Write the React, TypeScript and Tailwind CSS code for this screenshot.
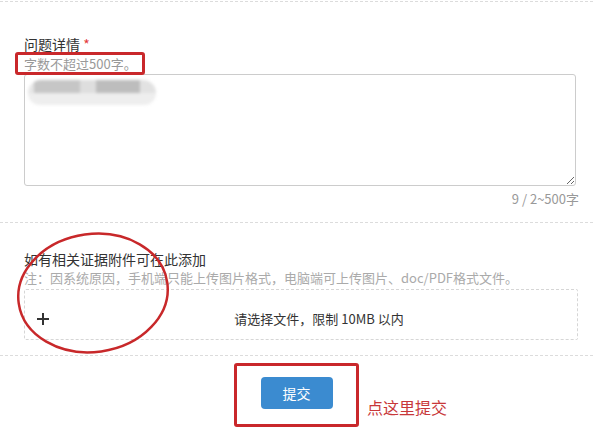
import React from 'react';

const font = {
  fontFamily: '"Noto Sans CJK SC", "Noto Sans", "Liberation Sans", sans-serif',
};

// Blurred placeholder text inside the textarea
const BlurredText: React.FC = () => (
  <div className="absolute left-[4px] top-[6px] w-[128px] h-[25px] blur-[1.5px] pointer-events-none">
    <div className="flex h-[13px] rounded-t-full overflow-hidden">
      <div className="w-[6px] bg-[#e6e6e6]" />
      <div className="w-[46px] bg-[#c6c6c6]" />
      <div className="w-[16px] bg-[#dedede]" />
      <div className="w-[44px] bg-[#bdbdbd]" />
      <div className="w-[16px] bg-[#e2e2e2]" />
    </div>
    <div className="h-[12px] bg-[#eeeeee] rounded-b-full" />
  </div>
);

const App: React.FC = () => {
  return (
    <div
      className="relative w-[593px] h-[441px] overflow-hidden bg-white text-[#333]"
      style={font}
    >
      <div className="mt-px border-t border-dashed border-[#dcdcdc]" />

      {/* problem detail */}
      <section className="pl-6 pt-[32px] pb-[14px] border-b border-dashed border-[#dcdcdc]">
        <div className="text-[14px] leading-[20px]">
          问题详情 <span className="text-[#e4393c]">*</span>
        </div>
        <div className="mt-px text-[13px] leading-[18px] text-[#999]">
          字数不超过500字。
        </div>
        <div className="relative mt-px w-[552px]">
          <textarea
            className="block w-[552px] h-[112px] border border-[#cccccc] rounded-[3px] outline-none"
            defaultValue=""
          />
          <BlurredText />
        </div>
        <div className="mt-[4px] w-[555px] text-right text-[13px] leading-[18px] text-[#999]">
          9 / 2~500字
        </div>
      </section>

      {/* attachments */}
      <section className="pl-6 pt-[26px] pb-[15px] border-b border-dashed border-[#dcdcdc]">
        <div className="text-[14px] leading-[20px]">如有相关证据附件可在此添加</div>
        <div className="text-[13px] leading-[18px] text-[#aaa]">
          注：因系统原因，手机端只能上传图片格式，电脑端可上传图片、doc/PDF格式文件。
        </div>
        <div className="mt-[2px] w-[554px] h-[51px] flex items-center pt-[8px] border border-dashed border-[#d6d6d6] rounded-[2px] cursor-pointer">
          <span className="w-9 pl-3 flex items-center">
            <svg width="12" height="12" viewBox="0 0 12 12">
              <path d="M6 0v12M0 6h12" stroke="#333" strokeWidth="2" />
            </svg>
          </span>
          <span className="flex-1 text-center text-[13px] text-[#333]">
            请选择文件，限制 10MB 以内
          </span>
        </div>
      </section>

      {/* submit */}
      <section className="flex justify-center pt-[21px]">
        <button className="w-[72px] h-[32px] rounded-[4px] bg-[#3b8bd0] text-white text-[14px]">
          提交
        </button>
      </section>

      {/* annotations */}
      <div className="absolute left-[15px] top-[52px] w-[130px] h-[23px] border-[3px] border-[#c9282b] rounded-[3px]" />
      <svg
        className="absolute left-[10px] top-[225px]"
        width="170"
        height="135"
        viewBox="0 0 170 135"
      >
        <ellipse
          cx="83"
          cy="68"
          rx="75"
          ry="59"
          fill="none"
          stroke="#c8282a"
          strokeWidth="2.5"
          transform="rotate(-8 83 68)"
        />
      </svg>
      <div className="absolute left-[234px] top-[363px] w-[125px] h-[64px] border-[3px] border-[#c9282b] rounded-[3px]" />
      <div className="absolute left-[367px] top-[396px] text-[16px] leading-[22px] text-[#c8383a]">
        点这里提交
      </div>
    </div>
  );
};

export default App;
